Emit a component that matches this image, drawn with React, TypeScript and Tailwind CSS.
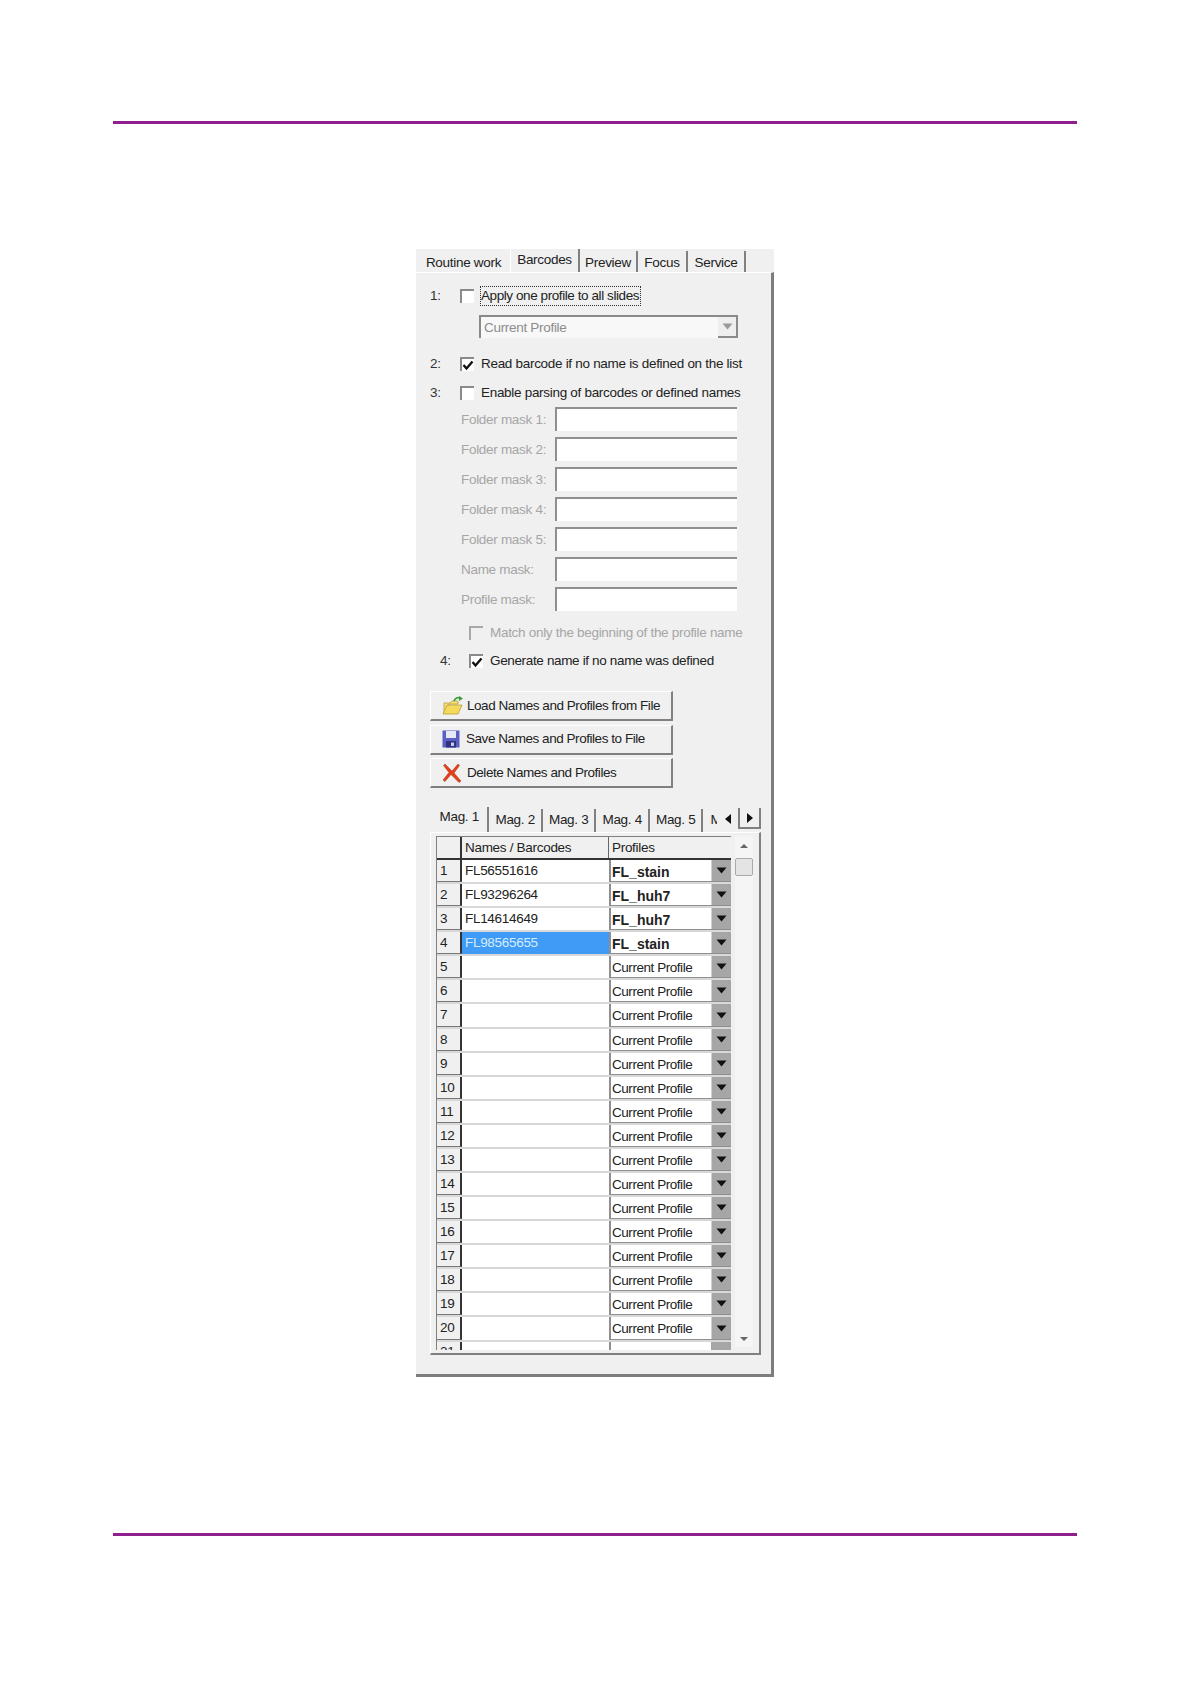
import { FC, ReactNode } from "react";

const font = { fontFamily: '"Liberation Sans", Arial, sans-serif' };

const topTabs = [
  { label: "Routine work", w: "w-[93px]", active: false },
  { label: "Barcodes", w: "w-[70px]", active: true },
  { label: "Preview", w: "w-[58px]", active: false },
  { label: "Focus", w: "w-[50px]", active: false },
  { label: "Service", w: "w-[58px]", active: false },
];

const magTabs = [
  { label: "Mag. 1", w: "w-[59px]", active: true },
  { label: "Mag. 2", w: "w-[54px]", active: false },
  { label: "Mag. 3", w: "w-[54px]", active: false },
  { label: "Mag. 4", w: "w-[54px]", active: false },
  { label: "Mag. 5", w: "w-[54px]", active: false },
];

const masks = [
  "Folder mask 1:",
  "Folder mask 2:",
  "Folder mask 3:",
  "Folder mask 4:",
  "Folder mask 5:",
  "Name mask:",
  "Profile mask:",
];

const rows = [
  { name: "FL56551616", profile: "FL_stain" },
  { name: "FL93296264", profile: "FL_huh7" },
  { name: "FL14614649", profile: "FL_huh7" },
  { name: "FL98565655", profile: "FL_stain" },
  ...Array.from({ length: 16 }, () => ({ name: "", profile: "Current Profile" })),
];

const Arrow = ({ light }: { light?: boolean }) => (
  <svg width="11" height="7" viewBox="0 0 11 7">
    <path d="M0.5 0.5h10L5.5 6.5z" fill={light ? "#9a9a9a" : "#111"} />
  </svg>
);

const Check: FC<{ checked?: boolean; disabled?: boolean }> = ({ checked, disabled }) => (
  <div
    className={`w-[14px] h-[14px] flex items-center justify-center border-t-2 border-l-2 ${
      disabled ? "bg-[#f0f0f0] border-[#a8a8a8]" : "bg-white border-[#8a8a8a]"
    }`}
  >
    {checked && (
      <svg width="12" height="11" viewBox="0 0 12 11">
        <path d="M1.5 5l3 3.5L10.5 1.5" fill="none" stroke="#111" strokeWidth="2.4" />
      </svg>
    )}
  </div>
);

const OptionRow: FC<{ num?: string; numW?: string; className?: string; children: ReactNode; checked?: boolean; disabled?: boolean }> = ({
  num,
  numW = "w-[30px]",
  className = "",
  children,
  checked,
  disabled,
}) => (
  <div className={`flex items-center h-[20px] ${className}`}>
    <div className={`${numW} shrink-0 text-[#333]`}>{num}</div>
    <Check checked={checked} disabled={disabled} />
    {children}
  </div>
);

const Folder = () => (
  <svg width="22" height="20" viewBox="0 0 22 20">
    <path d="M2 7h6l2-2h6v3H7L2 18z" fill="#f7e27a" stroke="#b8a03a" strokeWidth="0.8" />
    <path d="M5 9h15l-4 9H1z" fill="#f4d95c" stroke="#b8a03a" strokeWidth="0.8" />
    <path d="M12 5c1-3 4-4 6-3" fill="none" stroke="#3f9e3a" strokeWidth="1.8" />
    <path d="M17 0l4 2.5-4 2.5z" fill="#3f9e3a" />
  </svg>
);

const Floppy = () => (
  <svg width="18" height="18" viewBox="0 0 18 18">
    <rect x="0.5" y="0.5" width="17" height="17" fill="#5a5fc4" />
    <rect x="4" y="1" width="10" height="7" fill="#e6e8f6" />
    <rect x="4" y="11" width="10" height="6.5" fill="#2e3280" />
    <rect x="9" y="12.5" width="3" height="3.5" fill="#c9cbe8" />
  </svg>
);

const RedX = () => (
  <svg width="20" height="20" viewBox="0 0 20 20">
    <path d="M3 1l7 7 6-7 1.5 1.5L12 10l7 8-2 1.5-8-8-6 7L1 17l6-7.5L1.5 2.5z" fill="#e2401c" stroke="#a8340f" strokeWidth="0.5" />
  </svg>
);

const ActionButton: FC<{ icon: ReactNode; label: string; iconW: string }> = ({ icon, label, iconW }) => (
  <div className="w-[243px] h-[30px] flex items-center bg-[#f0f0f0] border-t border-l border-t-white border-l-white border-r-2 border-b-2 border-r-[#808080] border-b-[#808080] pl-[11px] text-[#222] tracking-[-0.45px]">
    <div className={`${iconW} flex items-center shrink-0`}>{icon}</div>
    {label}
  </div>
);

const App = () => {
  return (
    <div className="w-[1190px] h-[1684px] bg-white flex flex-col pt-[121px]" style={font}>
      <div className="mx-[113px] h-[3px] bg-[#8e1f8c]" />

      <div className="ml-[416px] mt-[125px] w-[358px] h-[1128px] bg-[#f0f0f0] text-[13.5px] leading-none tracking-[-0.3px] flex flex-col">
        {/* main tabs */}
        <div className="flex items-end h-[23px] shrink-0 pl-[1px]">
          {topTabs.map((t) => (
            <div
              key={t.label}
              className={`${t.w} flex justify-center text-[#222] ${
                t.active ? "h-[23px] pt-[4px] border-l border-l-white" : "h-[21px] pt-[5px]"
              } ${t.label === "Routine work" ? "" : "border-r-2 border-r-[#808080]"}`}
            >
              {t.label}
            </div>
          ))}
        </div>

        <div className="flex-1 border-t border-t-white border-r-[3px] border-b-[3px] border-r-[#7d7d7d] border-b-[#7d7d7d] pl-[14px] flex flex-col">
          <OptionRow num="1:" className="mt-[13px]">
            <div className="ml-[6px] pr-[1px] py-[2px] border border-dotted border-[#333] text-[#222] tracking-[-0.42px]">
              Apply one profile to all slides
            </div>
          </OptionRow>

          <div className="ml-[49px] mt-[9px] w-[259px] h-[23px] bg-[#f8f8f8] border-t-2 border-l-2 border-[#8a8a8a] flex items-center justify-between pl-[3px] text-[#8c8c8c]">
            Current Profile
            <div className="w-[20px] h-[21px] bg-[#eeeeee] border-r-2 border-b-2 border-[#8a8a8a] flex items-center justify-center">
              <Arrow light />
            </div>
          </div>

          <OptionRow num="2:" checked className="mt-[16px]">
            <div className="ml-[7px] text-[#222]">Read barcode if no name is defined on the list</div>
          </OptionRow>
          <OptionRow num="3:" className="mt-[9px]">
            <div className="ml-[7px] text-[#222]">Enable parsing of barcodes or defined names</div>
          </OptionRow>

          <div className="flex flex-col gap-[6px] mt-[4px]">
            {masks.map((m) => (
              <div key={m} className="flex items-center h-[24px] pl-[31px] text-[#a6a6a6]">
                <div className="w-[94px] shrink-0 pt-[2px]">{m}</div>
                <div className="w-[182px] h-[24px] bg-white border-t-2 border-l-2 border-[#8f8f8f]" />
              </div>
            ))}
          </div>

          <OptionRow checked={false} disabled num="" numW="w-[39px]" className="mt-[12px]">
            <div className="ml-[7px] text-[#a6a6a6]">Match only the beginning of the profile name</div>
          </OptionRow>
          <OptionRow checked num="4:" numW="w-[39px] pl-[10px]" className="mt-[8px]">
            <div className="ml-[7px] text-[#222] tracking-[-0.35px]">Generate name if no name was defined</div>
          </OptionRow>

          <div className="flex flex-col gap-[3.5px] mt-[20px]">
            <ActionButton icon={<Folder />} label="Load Names and Profiles from File" iconW="w-[25px]" />
            <ActionButton icon={<Floppy />} label="Save Names and Profiles to File" iconW="w-[24px]" />
            <ActionButton icon={<RedX />} label="Delete Names and Profiles" iconW="w-[25px]" />
          </div>

          {/* magazine tabs */}
          <div className="flex items-end h-[25px] mt-[19px] w-[331px] pl-[1px] shrink-0">
            {magTabs.map((t) => (
              <div
                key={t.label}
                className={`${t.w} flex justify-center border-r-2 border-r-[#808080] text-[#222] ${
                  t.active ? "h-[25px] pt-[3px]" : "h-[23px] pt-[4px]"
                }`}
              >
                {t.label}
              </div>
            ))}
            <div className="w-[14px] h-[23px] pt-[4px] pl-[7px] overflow-hidden text-[#222]">M</div>
            <div className="w-[23px] h-[21px] mb-[3px] flex items-center justify-center border-r-2 border-r-[#808080]">
              <svg width="6" height="10" viewBox="0 0 6 10"><path d="M6 0v10L0 5z" fill="#111" /></svg>
            </div>
            <div className="w-[21px] h-[21px] mb-[3px] flex items-center justify-center border-r-2 border-b-2 border-[#808080]">
              <svg width="6" height="10" viewBox="0 0 6 10"><path d="M0 0v10l6-5z" fill="#111" /></svg>
            </div>
          </div>

          <div className="w-[331px] h-[523px] border-t border-l border-t-white border-l-white border-r-2 border-b-2 border-r-[#808080] border-b-[#808080] pl-[5px] pt-[3px] flex overflow-hidden">
            <div className="w-[295px] h-[514px] overflow-hidden border-t border-l border-[#808080]">
              <div className="flex h-[23px] border-b-2 border-[#333] text-[#222]">
                <div className="w-[25px] border-r-2 border-[#333]" />
                <div className="w-[147px] pl-[3px] pt-[4px] border-r border-[#666]">Names / Barcodes</div>
                <div className="flex-1 pl-[3px] pt-[4px]">Profiles</div>
              </div>
              {rows.map((r, i) => (
                <div key={i} className="flex h-[24.08px] border-b-2 border-[#d8d8d8]">
                  <div className="w-[25px] pl-[3px] pt-[4px] border-r-2 border-b border-r-[#333] border-b-[#777] text-[#222] shrink-0">
                    {i + 1}
                  </div>
                  <div className={`w-[147px] pl-[3px] pt-[4px] shrink-0 ${i === 3 ? "bg-[#3f9bf5] text-[#d5ecff]" : "bg-white text-[#222]"}`}>
                    {r.name}
                  </div>
                  <div className="flex-1 flex bg-white border-l-2 border-b border-[#8f8f8f]">
                    <div className={`flex-1 pl-[1px] pt-[5px] text-[#222] ${i < 4 ? "font-bold tracking-normal text-[14px]" : "tracking-[-0.45px]"}`}>
                      {r.profile}
                    </div>
                    <div className="w-[20px] bg-[#a6a6a6] flex items-center justify-center border-l border-l-[#d0d0d0]">
                      <Arrow />
                    </div>
                  </div>
                </div>
              ))}
              <div className="flex h-[24px]">
                <div className="w-[25px] pl-[3px] pt-[3px] border-r-2 border-r-[#333] text-[#222] shrink-0">21</div>
                <div className="w-[147px] bg-white shrink-0" />
                <div className="flex-1 flex bg-white border-l-2 border-l-[#8f8f8f]">
                  <div className="flex-1" />
                  <div className="w-[20px] bg-[#a6a6a6]" />
                </div>
              </div>
            </div>
            <div className="w-[18px] ml-[4px] h-[511px] flex flex-col items-center bg-[#f5f5f5]">
              <div className="mt-[8px] w-0 h-0 border-x-[4px] border-x-transparent border-b-[4px] border-b-[#666]" />
              <div className="mt-[10px] w-[18px] h-[18px] bg-[#e4e4e4] border border-[#aaa] rounded-[2px]" />
              <div className="mt-auto mb-[6px] w-0 h-0 border-x-[4px] border-x-transparent border-t-[4px] border-t-[#666]" />
            </div>
          </div>
        </div>
      </div>

      <div className="mx-[113px] mt-[156px] h-[3px] bg-[#8e1f8c]" />
    </div>
  );
};

export default App;
